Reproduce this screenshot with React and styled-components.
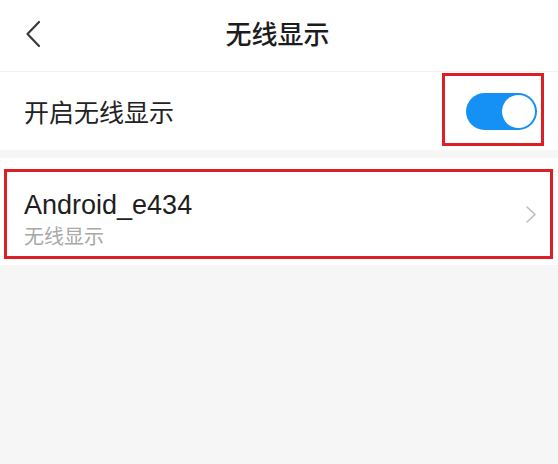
import styled, { createGlobalStyle } from "styled-components";

const GlobalStyle = createGlobalStyle`
  html, body {
    margin: 0;
    padding: 0;
    background: #f6f6f6;
  }
  body {
    font-family: "Liberation Sans", "Noto Sans CJK SC", sans-serif;
  }
`;

export default function App() {
  return (
    <>
      <GlobalStyle />
      <Page>
        <Header>
          <BackButton aria-label="back">
            <svg width="16" height="28" viewBox="0 0 16 28" fill="none">
              <path d="M14 2 L2.5 14 L14 26" stroke="#3a3a3a" strokeWidth="2.2" strokeLinecap="round" strokeLinejoin="round" />
            </svg>
          </BackButton>
          <Title>无线显示</Title>
          <span />
        </Header>

        <SwitchRow>
          <RowLabel>开启无线显示</RowLabel>
          <SwitchMark>
            <Toggle $on>
              <Knob />
            </Toggle>
          </SwitchMark>
        </SwitchRow>

        <DeviceRow>
          <DeviceMark>
            <DeviceInfo>
              <DeviceName>Android_e434</DeviceName>
              <DeviceSub>无线显示</DeviceSub>
            </DeviceInfo>
            <svg width="12" height="19" viewBox="0 0 12 19" fill="none">
              <path d="M2 2 L10 9.5 L2 17" stroke="#bdbdbd" strokeWidth="1.6" strokeLinecap="round" strokeLinejoin="round" />
            </svg>
          </DeviceMark>
        </DeviceRow>
      </Page>
    </>
  );
}

const Page = styled.div`
  width: 558px;
  height: 464px;
  background: #f6f6f6;
  overflow: hidden;
`;

const Header = styled.div`
  height: 72px;
  background: #fff;
  border-bottom: 1px solid #efefef;
  box-sizing: border-box;
  display: grid;
  grid-template-columns: 1fr auto 1fr;
  align-items: center;
  padding-left: 25px;
`;

const BackButton = styled.div`
  display: flex;
  align-items: center;
  margin-top: -3px;
`;

const Title = styled.div`
  font-family: "Noto Sans CJK SC", sans-serif;
  font-size: 26px;
  font-weight: 500;
  color: #1c1c1c;
  margin-left: -28px;
  margin-top: -6px;
`;

const SwitchRow = styled.div`
  height: 78px;
  background: #fff;
  display: flex;
  align-items: flex-start;
  justify-content: space-between;
  padding: 1px 14px 0 24px;
  box-sizing: border-box;
`;

const RowLabel = styled.div`
  font-family: "Noto Sans CJK SC", sans-serif;
  font-size: 25px;
  color: #222;
  line-height: 30px;
  margin-top: 23px;
`;

const SwitchMark = styled.div`
  width: 102px;
  height: 73px;
  box-sizing: border-box;
  border: 3px solid #dc1f27;
  display: flex;
  justify-content: flex-end;
  padding: 17px 4px 0 0;
`;

const Toggle = styled.div`
  width: 71px;
  height: 37px;
  border-radius: 19px;
  background: ${(p) => (p.$on ? "#1590f4" : "#d8d8d8")};
  display: flex;
  justify-content: ${(p) => (p.$on ? "flex-end" : "flex-start")};
  align-items: center;
  padding: 0 2px;
  box-sizing: border-box;
`;

const Knob = styled.div`
  width: 33px;
  height: 33px;
  border-radius: 50%;
  background: #fff;
`;

const DeviceRow = styled.div`
  margin-top: 8px;
  height: 107px;
  background: #fff;
  padding: 11px 5px 0 4px;
  box-sizing: border-box;
`;

const DeviceMark = styled.div`
  height: 90px;
  box-sizing: border-box;
  border: 3px solid #dc1f27;
  display: flex;
  align-items: center;
  justify-content: space-between;
  padding: 0 13px 0 17px;
`;

const DeviceInfo = styled.div`
  display: flex;
  flex-direction: column;
  margin-top: 9px;
`;

const DeviceName = styled.div`
  font-family: "Liberation Sans", sans-serif;
  font-size: 27px;
  line-height: 32px;
  color: #1e1e1e;
`;

const DeviceSub = styled.div`
  font-family: "Noto Sans CJK SC", sans-serif;
  font-size: 20px;
  line-height: 26px;
  color: #a8a8a8;
  margin-top: 2px;
`;
